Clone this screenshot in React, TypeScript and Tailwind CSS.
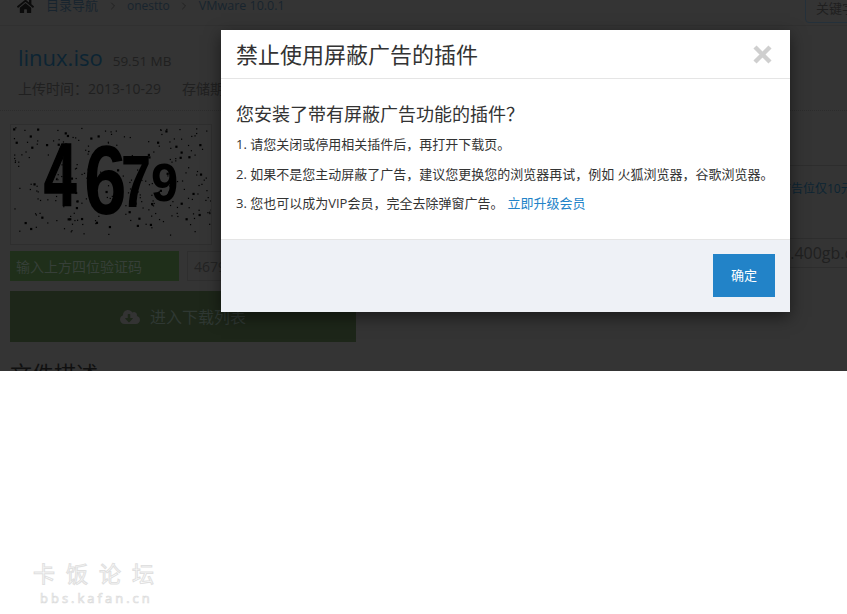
import React from "react";
import { FaHome, FaCloudDownloadAlt } from "react-icons/fa";
import { ChevronRight } from "lucide-react";

const font = { fontFamily: '"Open Sans","Noto Sans CJK SC",sans-serif' };

function Dots() {
  const dots: React.ReactElement[] = [];
  let s = 12345;
  const r = () => {
    s = (s * 1103515245 + 12345) & 0x7fffffff;
    return s / 0x7fffffff;
  };
  for (let i = 0; i < 270; i++) {
    const x = r() * 198 + 2;
    const y = r() * 108 + 2;
    const w = r() < 0.2 ? 2.2 : 1.2;
    dots.push(<rect key={i} x={x} y={y} width={w} height={w} fill="#000" />);
  }
  return <>{dots}</>;
}

function Captcha() {
  const f = { fontFamily: '"Liberation Sans",sans-serif', fontWeight: 700 };
  return (
    <svg width="200" height="118" className="block">
      <Dots />
      <text transform="translate(33 81) scale(1.12 1.7)" fontSize="52" style={f} fill="#000" stroke="#000" strokeWidth="1">4</text>
      <text transform="translate(73 89) scale(1.42 1.82)" fontSize="54" style={f} fill="#000">6</text>
      <text transform="translate(110 82) scale(1.08 1.5)" fontSize="50" style={f} fill="#000">7</text>
      <text transform="translate(140 76) scale(0.98 1.08)" fontSize="50" style={f} fill="#000">9</text>
    </svg>
  );
}

export default function App() {
  return (
    <div className="relative h-[614px] w-[847px] overflow-hidden bg-white" style={font}>
      <div className="h-[371px] overflow-hidden bg-[#343434]">
        <div className="flex h-[26px] items-center border-b border-[#303030] pl-[17px]">
          <FaHome className="mb-[13px] text-[17px] text-[#0b0b0b]" />
          <div className="mb-[13px] ml-[12px] flex items-center gap-[8.5px] text-[13px] text-[#18242e] whitespace-nowrap">
            <span>目录导航</span>
            <ChevronRight size={12} className="text-[#222]" />
            <span className="text-[12px]">onestto</span>
            <ChevronRight size={12} className="text-[#222]" />
            <span className="text-[12.5px]">VMware 10.0.1</span>
          </div>
          <div className="ml-auto mb-[8px] -mr-[20px] flex h-[28px] w-[62px] shrink-0 items-end rounded border border-[#24303a] pb-[3px] pl-[10px] text-[13px] text-[#1f1f1f] whitespace-nowrap">
            关键字
          </div>
        </div>
        <div className="flex h-[85px] flex-col border-b border-dotted border-[#2c2c2c] pl-[18px] pt-[15px]">
          <div className="flex items-baseline gap-[10px]">
            <span className="text-[22px] leading-[32px] text-[#0c2433]">linux.iso</span>
            <span className="text-[13.5px] text-[#202020]">59.51 MB</span>
          </div>
          <div className="mt-[7px] flex gap-[21px] text-[14px] leading-[18px] text-[#202020] whitespace-nowrap">
            <span>上传时间：2013-10-29</span>
            <span>存储期限</span>
          </div>
        </div>
        <div className="flex pt-[13px]">
          <div className="ml-[10px] w-[346px] shrink-0">
            <div className="h-[121px] w-[202px] border border-[#2e2e2e] bg-[#353535]">
              <Captcha />
            </div>
            <div className="mt-[6px] flex h-[30px] gap-[8px]">
              <div className="flex w-[169px] items-center bg-[#1f2f1a] pl-[6px] text-[14px] text-[#363f38] whitespace-nowrap">
                输入上方四位验证码
              </div>
              <div className="flex flex-1 items-center border border-[#2e2e2e] pl-[6px] text-[14px] text-[#232323]">
                4679
              </div>
            </div>
            <div className="mt-[10px] flex h-[51px] items-center justify-center gap-[10px] bg-[#1d2619] text-[16px] text-[#2f3833]">
              <FaCloudDownloadAlt className="text-[20px] text-[#333]" />
              <span>进入下载列表</span>
            </div>
            <div className="mt-[16px] text-[22px] leading-[30px] text-[#101010]">文件描述</div>
          </div>
          <div className="ml-[86px] flex-1 pt-[41px] whitespace-nowrap">
            <div className="h-[74px] border-y border-[#2d2d2d] pl-[337px] pt-[14px] text-[12px] text-[#0c2433]">
              广告位仅10元
            </div>
            <div className="h-[29px] border-b border-[#2d2d2d] pl-[311px] pt-[3px] text-[16px] leading-[22px] text-[#202020]">
              www.400gb.com
            </div>
          </div>
        </div>
      </div>

      <div className="absolute left-[221px] top-[30px] flex h-[282px] w-[569px] flex-col bg-white shadow-[0_5px_15px_rgba(0,0,0,0.5)]">
        <div className="flex h-[49px] shrink-0 items-center justify-between border-b border-[#e5e5e5] pl-[15px] pr-[18px]">
          <span className="text-[22px] leading-[30px] text-[#333]">禁止使用屏蔽广告的插件</span>
          <svg width="19" height="19" viewBox="0 0 19 19">
            <path d="M2 2 L17 17 M17 2 L2 17" stroke="#cfcfcf" strokeWidth="4.4" />
          </svg>
        </div>
        <div className="h-[160px] shrink-0 px-[15px] pt-[22px] text-[13px] text-[#333]">
          <div className="mb-[7px] text-[18px] leading-[26px]">您安装了带有屏蔽广告功能的插件？</div>
          <p className="h-[29.5px] leading-[20px]">1. 请您关闭或停用相关插件后，再打开下载页。</p>
          <p className="h-[29.5px] leading-[20px] whitespace-nowrap">2. 如果不是您主动屏蔽了广告，建议您更换您的浏览器再试，例如 火狐浏览器，谷歌浏览器。</p>
          <p className="leading-[20px]">
            3. 您也可以成为VIP会员，完全去除弹窗广告。
            <span className="ml-[4px] text-[#2283c8]">立即升级会员</span>
          </p>
        </div>
        <div className="flex flex-1 items-start justify-end border-t border-[#e5e5e5] bg-[#eef1f6] pr-[15px] pt-[14px]">
          <button className="h-[43px] w-[62px] bg-[#2283c8] text-[13px] text-white">确定</button>
        </div>
      </div>

      <div className="absolute left-[33px] top-[559px] select-none">
        <div className="text-[22px] leading-[28px] tracking-[11px] text-white [-webkit-text-stroke:1px_#e0e0e0] whitespace-nowrap">卡饭论坛</div>
        <div className="ml-[7px] mt-[4px] text-[13px] leading-[14px] tracking-[3px] text-white [-webkit-text-stroke:0.7px_#dcdcdc] whitespace-nowrap">bbs.kafan.cn</div>
      </div>
    </div>
  );
}
